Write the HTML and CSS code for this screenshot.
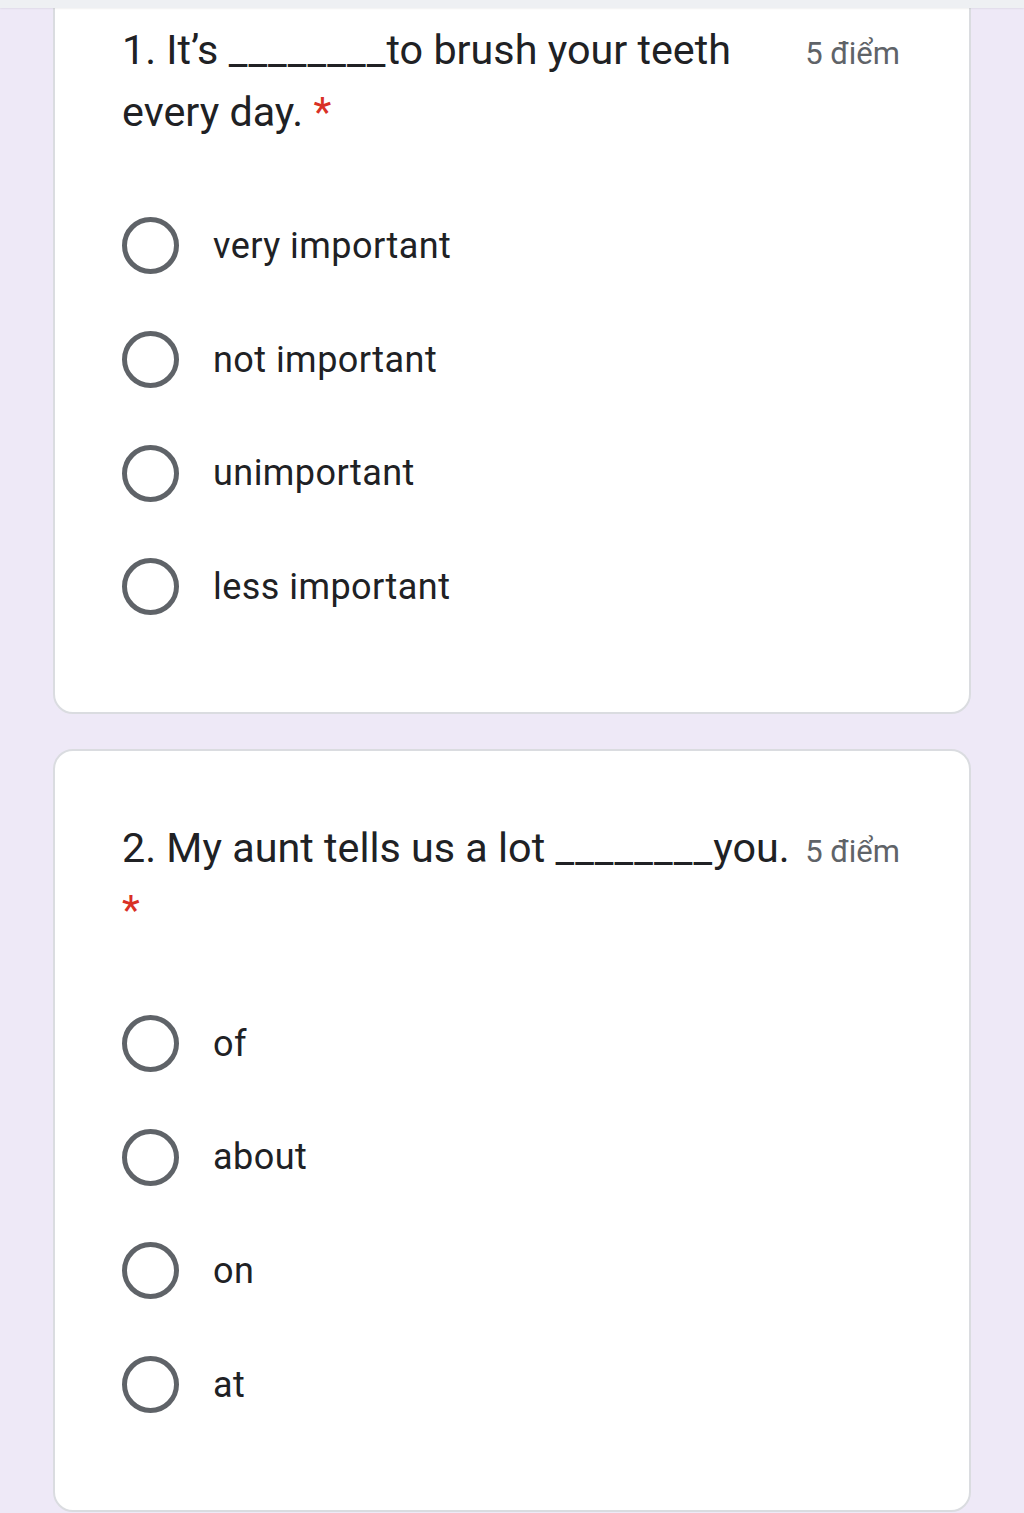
FILE: index.html
```html
<!DOCTYPE html>
<html lang="vi">
<head>
<meta charset="utf-8">
<title>Form</title>
<link rel="stylesheet" href="styles.css">
</head>
<body>
<div class="topbar"></div>
<main class="page">
  <section class="card card-first">
    <div class="q-head">
      <div class="q-title">1. It’s <span class="blank">________</span>to brush your teeth every day.<span class="req"> *</span></div>
      <div class="q-points">5 điểm</div>
    </div>
    <div class="options">
      <label class="opt"><span class="radio"></span><span class="opt-text">very important</span></label>
      <label class="opt"><span class="radio"></span><span class="opt-text">not important</span></label>
      <label class="opt"><span class="radio"></span><span class="opt-text">unimportant</span></label>
      <label class="opt"><span class="radio"></span><span class="opt-text">less important</span></label>
    </div>
  </section>
  <section class="card">
    <div class="q-head">
      <div class="q-title">2. My aunt tells us a lot <span class="blank">________</span>you.<span class="req"> *</span></div>
      <div class="q-points">5 điểm</div>
    </div>
    <div class="options">
      <label class="opt"><span class="radio"></span><span class="opt-text">of</span></label>
      <label class="opt"><span class="radio"></span><span class="opt-text">about</span></label>
      <label class="opt"><span class="radio"></span><span class="opt-text">on</span></label>
      <label class="opt"><span class="radio"></span><span class="opt-text">at</span></label>
    </div>
  </section>
</main>
</body>
</html>
```
FILE: styles.css
```css
html, body {
  margin: 0;
  padding: 0;
}
body {
  background: #eee9f7;
  font-family: Roboto, "Noto Sans", sans-serif;
  color: #202124;
  overflow: hidden;
}
.topbar {
  position: fixed;
  top: 0;
  left: 0;
  right: 0;
  height: 8px;
  background: #eef0f3;
  box-shadow: 0 1px 2px rgba(0,0,0,0.06);
  z-index: 5;
}
.page {
  display: flex;
  flex-direction: column;
  gap: 35px;
  padding-left: 53px;
  width: 918px;
}
.card {
  background: #fff;
  border: 2px solid #dadce0;
  border-radius: 20px;
  padding: 66px 69px 68px 67px;
}
.card-first {
  margin-top: -49px;
}
.q-head {
  display: flex;
  align-items: baseline;
}
.q-title {
  flex: 1;
  font-size: 41.3px;
  line-height: 62px;
  color: #202124;
  padding-right: 12px;
}
.blank {
  letter-spacing: 1.1px;
}
.req {
  color: #d93025;
}
.q-points {
  font-size: 31px;
  color: #5f6368;
  white-space: nowrap;
}
.options {
  display: flex;
  flex-direction: column;
  margin-top: 46px;
}
.opt {
  display: flex;
  align-items: center;
  height: 113.7px;
}
.radio {
  box-sizing: border-box;
  width: 57px;
  height: 57px;
  border: 5.5px solid #5f6368;
  border-radius: 50%;
  margin-right: 34px;
  flex: none;
}
.opt-text {
  font-size: 36px;
  letter-spacing: 0.45px;
  color: #202124;
}
```
